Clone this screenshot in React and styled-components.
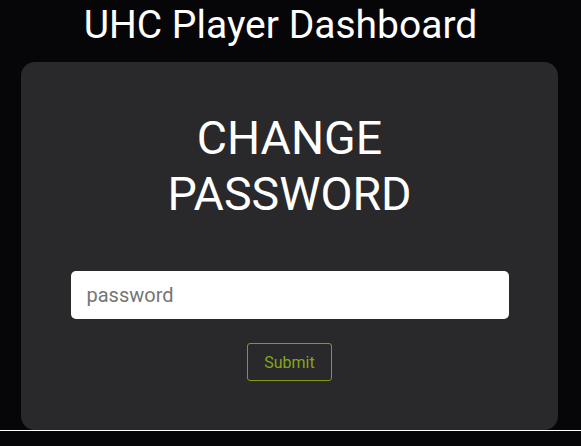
import styled, { createGlobalStyle } from "styled-components";

const GlobalStyle = createGlobalStyle`
  html, body {
    margin: 0;
    padding: 0;
    background: #060508;
    font-family: Roboto, "Liberation Sans", sans-serif;
  }
`;

const App = () => {
  return (
    <>
      <GlobalStyle />
      <Page>
        <Title>UHC Player Dashboard</Title>
        <Card>
          <Heading>
            CHANGE
            <br />
            PASSWORD
          </Heading>
          <Form onSubmit={(e) => e.preventDefault()}>
            <Input type="password" placeholder="password" />
            <Button type="submit">Submit</Button>
          </Form>
        </Card>
      </Page>
      <Rule />
    </>
  );
};
export default App;

const Page = styled.div`
  display: flex;
  flex-direction: column;
  align-items: center;
  padding: 0 23px 0 21px;
`;

const Title = styled.h1`
  margin: 3px 18px 0 0;
  font-size: 39px;
  font-weight: 400;
  line-height: 45px;
  color: #fff;
`;

const Card = styled.div`
  box-sizing: border-box;
  width: 100%;
  margin-top: 14px;
  height: 368px;
  background: #29282b;
  border-radius: 14px;
  display: flex;
  flex-direction: column;
  align-items: center;
  padding-top: 48px;
`;

const Heading = styled.h2`
  margin: 0;
  font-size: 46.5px;
  font-weight: 400;
  line-height: 56px;
  color: #fff;
  text-align: center;
`;

const Form = styled.form`
  display: flex;
  flex-direction: column;
  align-items: center;
  gap: 24px;
  margin-top: 49px;
`;

const Input = styled.input`
  box-sizing: border-box;
  width: 438px;
  height: 48px;
  border: none;
  border-radius: 5px;
  background: #fff;
  padding: 0 16px;
  font-family: Roboto, "Liberation Sans", sans-serif;
  font-size: 20px;
  color: #333;
  outline: none;

  ::placeholder {
    color: #555;
  }
`;

const Button = styled.button`
  box-sizing: border-box;
  width: 85px;
  height: 38px;
  background: transparent;
  border: 1px solid #7f9c13;
  border-radius: 3px;
  color: #86a51c;
  font-family: Roboto, "Liberation Sans", sans-serif;
  font-size: 16px;
  cursor: pointer;
`;

const Rule = styled.hr`
  margin: 0;
  border: none;
  border-top: 1px solid #fff;
`;
